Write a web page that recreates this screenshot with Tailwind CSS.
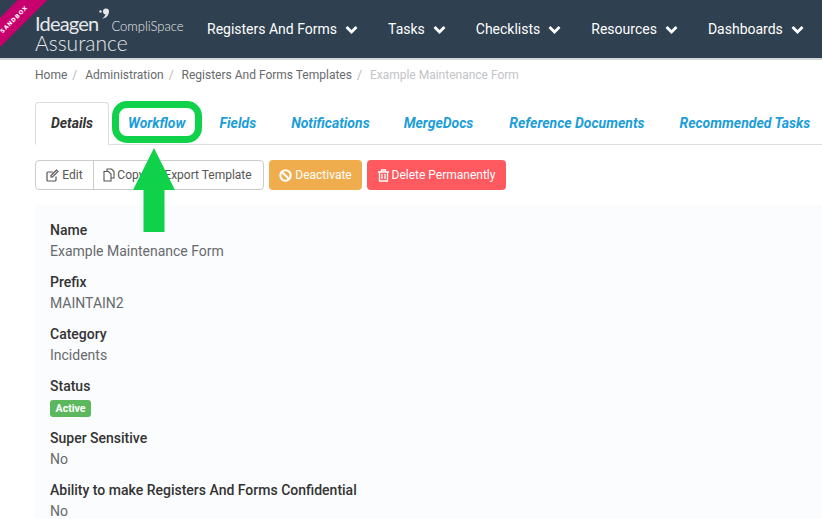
<!DOCTYPE html>
<html lang="en">
<head>
  <meta charset="UTF-8">
  <title>Example Maintenance Form</title>
  <script src="https://cdn.jsdelivr.net/npm/@tailwindcss/browser@4"></script>
</head>
<body class="relative h-[519px] w-[822px] overflow-hidden bg-white font-['Roboto',sans-serif] text-[14px] text-[#676a6c]">

  <!-- Top nav -->
  <header class="relative flex h-[60px] items-center overflow-hidden border-b-2 border-[#d4d6d8] bg-[#2f4050]">
    <div class="flex w-[207px] shrink-0 flex-col pl-[35px] pt-[6px] font-['Lato',sans-serif] font-light text-[#e6e8ea]">
      <div class="flex h-[21px] items-center">
        <span class="mt-[2px] text-[20px] font-normal leading-[21px] tracking-[-0.8px]">Ideagen</span>
        <svg class="mb-[16px] h-[12px] w-[12px]" viewBox="0 0 12 12" fill="#e6e8ea">
          <circle cx="8" cy="3.500" r="3"/><path d="M10.500 5c0 3-3 5.500-6.500 5.500 2-1 3-2.500 3.500-4z"/><circle cx="2.500" cy="3.500" r="1.200"/>
        </svg>
        <span class="ml-[1px] mt-[8px] text-[13px] leading-[16px]">CompliSpace</span>
      </div>
      <div class="h-[20px] text-[21px] leading-[20px]">Assurance</div>
    </div>
    <nav class="flex items-center gap-[30px] pt-[1px] text-[14px] text-white">
      <a class="flex items-center gap-[8px]">Registers And Forms
        <svg class="h-[10px] w-[13px]" viewBox="0 0 13 10" fill="none" stroke="white" stroke-width="2.800"><path d="M1.500 2l5 5 5-5"/></svg></a>
      <a class="flex items-center gap-[8px]">Tasks
        <svg class="h-[10px] w-[13px]" viewBox="0 0 13 10" fill="none" stroke="white" stroke-width="2.800"><path d="M1.500 2l5 5 5-5"/></svg></a>
      <a class="flex items-center gap-[8px]">Checklists
        <svg class="h-[10px] w-[13px]" viewBox="0 0 13 10" fill="none" stroke="white" stroke-width="2.800"><path d="M1.500 2l5 5 5-5"/></svg></a>
      <a class="flex items-center gap-[8px]">Resources
        <svg class="h-[10px] w-[13px]" viewBox="0 0 13 10" fill="none" stroke="white" stroke-width="2.800"><path d="M1.500 2l5 5 5-5"/></svg></a>
      <a class="flex items-center gap-[8px]">Dashboards
        <svg class="h-[10px] w-[13px]" viewBox="0 0 13 10" fill="none" stroke="white" stroke-width="2.800"><path d="M1.500 2l5 5 5-5"/></svg></a>
    </nav>
  </header>

  <!-- Sandbox ribbon -->
  <div class="absolute left-[-19px] top-[6px] flex h-[21px] w-[70px] -rotate-45 items-center justify-center bg-[#c8006e] pr-[7px] pt-[1px] font-['DejaVu_Sans',sans-serif] text-[5.500px] font-bold tracking-[0.8px] text-white">SANDBOX</div>

  <div class="pl-[35px]">
    <!-- Breadcrumb -->
    <ol class="flex h-[29px] items-center text-[12px]">
      <li>Home<span class="pl-[5px] pr-[8px] text-[#b5b7b9]">/</span></li>
      <li>Administration<span class="pl-[5px] pr-[8px] text-[#b5b7b9]">/</span></li>
      <li>Registers And Forms Templates<span class="pl-[5px] pr-[8px] text-[#b5b7b9]">/</span></li>
      <li class="text-[#c2c4c6]">Example Maintenance Form</li>
    </ol>

    <!-- Tabs -->
    <ul class="mt-[13px] flex h-[43px] items-end whitespace-nowrap border-b border-[#dddddd] text-[14px] font-bold italic text-[#1b9dd9]">
      <li class="-mb-px flex h-[43px] w-[74px] items-center justify-center rounded-t-[4px] border border-b-white border-[#dddddd] bg-white text-[#333333]">Details</li>
      <li class="ml-[19px] flex h-[42px] items-center">Workflow</li>
      <li class="ml-[34px] flex h-[42px] items-center">Fields</li>
      <li class="ml-[35px] flex h-[42px] items-center">Notifications</li>
      <li class="ml-[34px] flex h-[42px] items-center">MergeDocs</li>
      <li class="ml-[36px] flex h-[42px] items-center">Reference Documents</li>
      <li class="ml-[35px] flex h-[42px] items-center">Recommended Tasks</li>
    </ul>

    <!-- Actions -->
    <div class="mt-[15px] flex h-[30px] text-[12px]">
      <div class="flex rounded-[4px] border border-[#cccccc] bg-white text-[#555555]">
        <a class="flex w-[58px] items-center justify-center gap-[3px] border-r border-[#cccccc]">
          <svg class="h-[13px] w-[13px]" viewBox="0 0 13 13" fill="none" stroke="#555" stroke-width="1.200"><path d="M10 7.500V11a1 1 0 0 1-1 1H2a1 1 0 0 1-1-1V4a1 1 0 0 1 1-1h5"/><path d="M5 6.500L10.500 1l1.500 1.500L6.500 8H5z"/></svg>Edit</a>
        <a class="flex w-[169px] items-center justify-center gap-[2px] pr-[2px]">
          <svg class="h-[14px] w-[12px]" viewBox="0 0 12 14" fill="none" stroke="#555" stroke-width="1.100"><path d="M4 3.500V1h4.500L11 3.500V10H8"/><path d="M1 3.500h4.500L8 6v7H1z"/></svg>Copy As Export Template</a>
      </div>
      <a class="ml-[5px] flex w-[93px] items-center justify-center gap-[3px] rounded-[4px] bg-[#f0ad4e] text-white">
        <svg class="h-[13px] w-[13px]" viewBox="0 0 12 12" fill="none" stroke="white" stroke-width="1.900"><circle cx="6" cy="6" r="4.800"/><path d="M2.700 2.700l6.600 6.600"/></svg>Deactivate</a>
      <a class="ml-[5px] flex w-[139px] items-center justify-center gap-[3px] rounded-[4px] bg-[#ff5a5f] text-white">
        <svg class="h-[13px] w-[11px]" viewBox="0 0 11 13" fill="none" stroke="white" stroke-width="1.300"><path d="M0 3h11M3.500 3V1h4v2M1.500 3v9h8V3M4 5v5M7 5v5"/></svg>Delete Permanently</a>
    </div>

    <!-- Details panel -->
    <div class="mt-[15px] h-[314px] overflow-hidden bg-[#fbfcfe] pl-[15px] pt-[15px]">
      <dl class="flex flex-col gap-[11px] leading-[20px]">
        <div><dt class="mb-[1px] font-medium text-[#333333]">Name</dt><dd>Example Maintenance Form</dd></div>
        <div><dt class="mb-[1px] font-medium text-[#333333]">Prefix</dt><dd>MAINTAIN2</dd></div>
        <div><dt class="mb-[1px] font-medium text-[#333333]">Category</dt><dd>Incidents</dd></div>
        <div><dt class="mb-[1px] font-medium text-[#333333]">Status</dt>
          <dd class="flex h-[20px] items-end"><span class="flex h-[17px] w-[41px] items-center justify-center rounded-[3px] bg-[#5cb85c] text-[10.500px] font-bold text-white">Active</span></dd></div>
        <div><dt class="mb-[1px] font-medium text-[#333333]">Super Sensitive</dt><dd>No</dd></div>
        <div><dt class="mb-[1px] font-medium text-[#333333]">Ability to make Registers And Forms Confidential</dt><dd>No</dd></div>
      </dl>
    </div>
  </div>

  <!-- Annotation: ring round the Workflow tab and arrow -->
  <div class="absolute left-[112px] top-[101px] h-[42px] w-[90px] rounded-[15px] border-[7px] border-[#10d24a]"></div>
  <svg class="absolute left-[133px] top-[148px] h-[84px] w-[42px]" viewBox="0 0 42 84" fill="#10d24a"><path d="M21 0L42 42H31.500V84H10.500V42H0z"/></svg>
</body>
</html>
